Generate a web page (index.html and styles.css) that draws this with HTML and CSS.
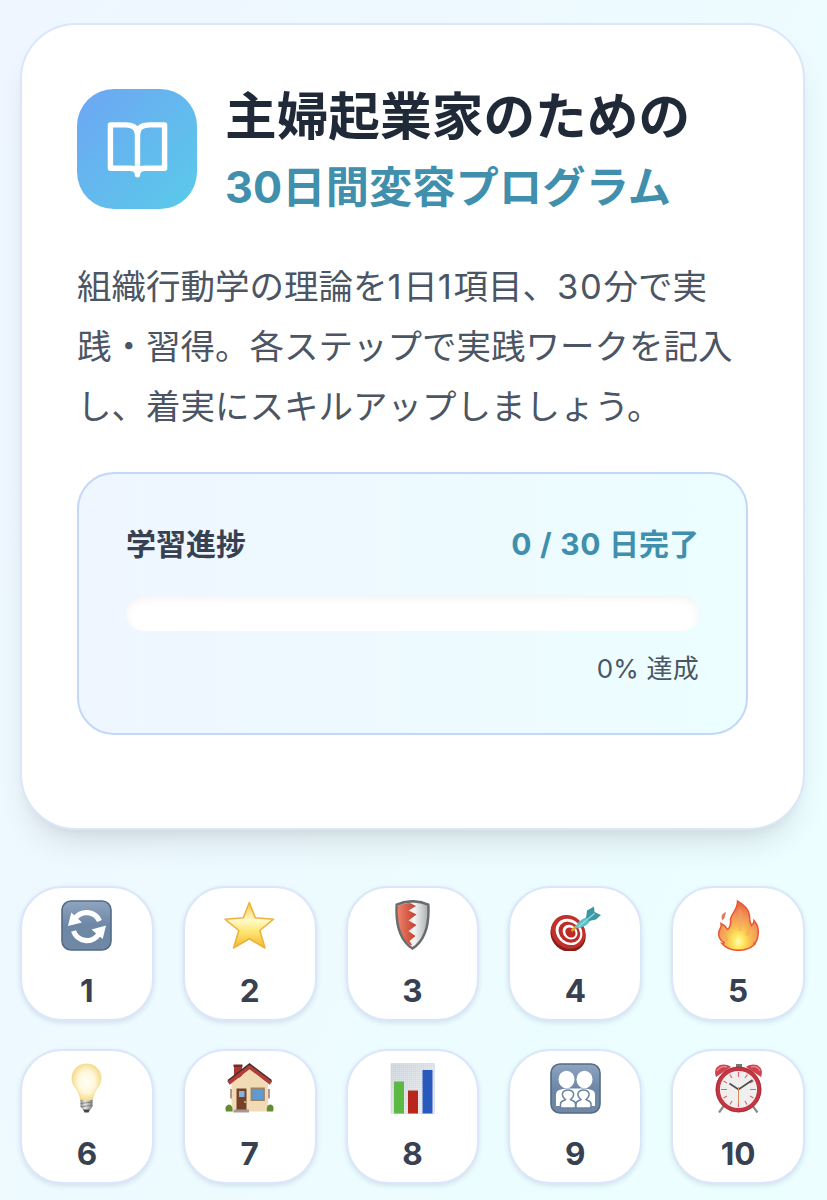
FILE: index.html
```html
<!DOCTYPE html>
<html lang="ja">
<head>
<meta charset="utf-8">
<title>30日間変容プログラム</title>
<link rel="stylesheet" href="styles.css">
</head>
<body>
<main class="page">
  <section class="card">
    <header class="hero">
      <div class="logo">
        <svg viewBox="0 0 24 24" fill="none" stroke="#fff" stroke-width="2" stroke-linecap="round" stroke-linejoin="round"><path d="M12 6.500v14.800M2 2.900h5.500Q12 2.900 12 6.500 12 2.900 16.500 2.900H22V18.900h-7.200Q12 18.900 12 21.300 12 18.900 9.200 18.900H2z"/></svg>
      </div>
      <h1 class="title"><span class="title-main">主婦起業家のための</span><span class="title-sub">30日間変容プログラム</span></h1>
    </header>
    <p class="lead">組織行動学の理論を<span class="num">1</span>日<span class="num">1</span>項目、<span class="num">30</span>分で実<br>践・習得。各ステップで実践ワークを記入<br>し、着実にスキルアップしましょう。</p>
    <div class="progress">
      <div class="progress-head"><span class="label">学習進捗</span><span class="count"><span class="num-bold">0 / 30 </span>日完了</span></div>
      <div class="bar"></div>
      <div class="percent">0% 達成</div>
    </div>
  </section>

  <nav class="days">
    <button class="day"><svg viewBox="0 0 51 51"><defs><linearGradient id="slate" x2="0" y2="1"><stop offset="0" stop-color="#8fa5bf"/><stop offset=".5" stop-color="#6d87a6"/><stop offset="1" stop-color="#7088a5"/></linearGradient></defs><rect x="1" y="1" width="49" height="49" rx="9" fill="url(#slate)" stroke="#536b86" stroke-width="1.600"/><g fill="none" stroke="#fff" stroke-width="5.200"><path d="M14 18.500A14.200 14.200 0 0 1 38.500 21"/><path d="M37.500 34.500A14.200 14.200 0 0 1 12.500 31"/></g><path d="M7 26 10.300 12.500 21 22.500zM45 25.500 41.700 39 30.500 29.500z" fill="#fff"/></svg><span>1</span></button>

    <button class="day"><svg viewBox="0 0 51 51"><defs><linearGradient id="gold" x2="0" y2="1"><stop offset="0" stop-color="#fbc94d"/><stop offset=".4" stop-color="#fff9c8"/><stop offset=".62" stop-color="#fde977"/><stop offset="1" stop-color="#f5b52c"/></linearGradient></defs><path d="M25.300 2.500 31.300 17.800 49.600 19.200 35.800 30.500 41 48 25.300 38.800 9.600 48 14.800 30.500 1 19.200 19.300 17.800z" fill="url(#gold)" stroke="#edb23d" stroke-width="1.600" stroke-linejoin="round"/></svg><span>2</span></button>

    <button class="day"><svg viewBox="0 0 51 51"><defs><linearGradient id="silver"><stop offset="0" stop-color="#bbb"/><stop offset=".55" stop-color="#f4f4f4"/><stop offset="1" stop-color="#a8acaf"/></linearGradient><linearGradient id="rust"><stop offset="0" stop-color="#ef8069"/><stop offset="1" stop-color="#bf3f2c"/></linearGradient></defs><path d="M25.500 1Q34 1.200 41.500 4.500C43 25 39 40 25.500 49 12 40 8 25 9.500 4.500Q17 1.200 25.500 1z" fill="url(#silver)"/><path d="M23 3Q15 4 11 6C9.500 23 13 37 23 45L25 45 22.500 41 28.500 36 21.500 31 29.500 25 21.500 20.500 29.500 14.500 21.500 10.500 29 6z" fill="url(#rust)"/><path d="M25.500 1.200Q34 1.400 41.300 4.600C42.500 25 38.500 40 25.500 48.500 12.500 40 8.500 25 9.700 4.600Q17 1.400 25.500 1.200z" fill="none" stroke="#6b6c6d" stroke-width="2.500"/></svg><span>3</span></button>

    <button class="day"><svg viewBox="0 0 51 51"><g transform="rotate(42 18 33)"><ellipse cx="19" cy="34" rx="18.500" ry="16.500" fill="#861e1a"/><ellipse cx="17.500" cy="32" rx="18" ry="16" fill="#c2302a"/><ellipse cx="18" cy="31.500" rx="14.200" ry="12.200" fill="#fff"/><ellipse cx="18.500" cy="31.500" rx="11.500" ry="9.800" fill="#bd2c26"/><ellipse cx="19" cy="31" rx="8" ry="6.800" fill="#fff"/><ellipse cx="19.500" cy="31" rx="5.500" ry="4.600" fill="#bd2c26"/></g><path d="M21.500 31 27 26" stroke="#d8a729" stroke-width="2.500"/><path d="M25.500 28.500Q27 20.500 37 17L40.500 20.500Q36 28 25.500 28.500z" fill="#61bfc7"/><path d="M36 18 37 10.500 44 6.500 44.500 12 51 15 46 19.500 39 21z" fill="#3f96a5"/><path d="M28 27 44.500 13.500" stroke="#8be0e0" stroke-width="1.300"/></svg><span>4</span></button>

    <button class="day"><svg viewBox="0 0 51 51"><defs><radialGradient id="flame" cx=".5" cy=".82" r=".78"><stop offset="0" stop-color="#fffcb5"/><stop offset=".18" stop-color="#ffe75e"/><stop offset=".4" stop-color="#f8bb50"/><stop offset=".65" stop-color="#f2985a"/><stop offset="1" stop-color="#ec6440"/></radialGradient></defs><path d="M24.500 1C29 4 36 8 36.500 16Q36.500 22 38.500 25.500 41 23.500 41 20.500C45 25 46 32 44.500 38Q43.500 42 41.500 43 43 43.500 41 45C36 49.500 30 50.500 24 50.300 17 50 12 47 9 43.500Q11 44 11 42.500C5 39 4.500 33 7.500 28Q8.500 26 8 23.500C12 25 13 27 14.500 29.500Q18 27 17.500 20C17 15 25 10 24.500 1z" fill="url(#flame)" stroke="#e95735" stroke-width="1.500"/><path d="M13 12C8 14 8 17 9.500 20.500Q12 18 12 16z" fill="#ec7454"/><path d="M26.500 9C30 18 26 24 27 31M36 26Q37 32 33 35M13 29Q9 37 15 40" fill="none" stroke="#f5a166" stroke-width="3" opacity=".45"/></svg><span>5</span></button>

    <button class="day"><svg viewBox="0 0 51 51"><defs><radialGradient id="glow" cx=".5" cy=".48" r=".57"><stop offset="0" stop-color="#fffef7"/><stop offset=".5" stop-color="#fff8dc"/><stop offset="1" stop-color="#f2d577"/></radialGradient><linearGradient id="metal"><stop offset="0" stop-color="#8a8a8a"/><stop offset=".4" stop-color="#e9e9e9"/><stop offset="1" stop-color="#777"/></linearGradient></defs><path d="M25.500 1C17 1 11 7 11 15.500 11 24 18.500 26 19.500 37Q25.500 39 31.500 37C32.500 26 40 24 40 15.500 40 7 34 1 25.500 1z" fill="url(#glow)" stroke="#efd88e" stroke-width=".8"/><path d="M19.500 36.500Q25.500 39 31.500 36.500V43.500L29 47H22L19.500 43.500z" fill="url(#metal)"/><path d="M19.500 40.500 31.500 39M19.500 43.800 31.500 42.300" stroke="#777" stroke-width=".8"/><path d="M22 46.500H29L27.500 49.500H23.500z" fill="#4b4541"/></svg><span>6</span></button>

    <button class="day"><svg viewBox="0 0 51 51"><path d="M10 2H18V15H10z" fill="#a93932"/><path d="M9.500 1.500H18.500V4H9.500z" fill="#7e2822"/><path d="M7.500 21 26 6 44 21V48.500H7.500z" fill="#f0dbb5"/><path d="M4.500 20 25.500 3.500 47 20" fill="none" stroke="#b53c34" stroke-width="4.200"/><path d="M4 17.500 25.500 1 47.500 17.500" fill="none" stroke="#43302e" stroke-width="1.500"/><path d="M12.500 25.500H22.500V47H12.500z" fill="#76402b"/><path d="M15 28H20.500V34H15z" fill="#82b5dd"/><circle cx="21" cy="39" r="1" fill="#eac56c"/><path d="M27.500 25.500H40V37H27.500z" fill="#5f9bd0" stroke="#9c8367" stroke-width="1.800"/><path d="M7 26V35.500M45 26V35.500" stroke="#9d6c57" stroke-width="1.400"/><path d="M2 48.500Q0 43 5 41.500 9 42 8.500 48.500zM43 48.500Q42 42 46 41.500 51 42 49 48.500z" fill="#638c31"/><path d="M10.500 46.500H25V49.500H9z" fill="#a39b92"/></svg><span>7</span></button>

    <button class="day"><svg viewBox="0 0 51 51"><defs><linearGradient id="paper" x2="1" y2="1"><stop offset="0" stop-color="#d5dbe2"/><stop offset="1" stop-color="#f7fafc"/></linearGradient><pattern id="graph" width="2" height="2" patternUnits="userSpaceOnUse"><path d="M0 0H2M0 0V2" stroke="#b9c3cf" stroke-width=".45"/></pattern></defs><path d="M4 .500H47.500V50.500H4z" fill="url(#paper)"/><path d="M4 .500H47.500V50.500H4z" fill="url(#graph)" stroke="#d4dae0" stroke-width=".7"/><path d="M7 18.500H17V50.500H7z" fill="#5cb944"/><path d="M21 27.500H31V50.500H21z" fill="#b9261b"/><path d="M35.500 7H45.500V50.500H35.500z" fill="#2859bd"/></svg><span>8</span></button>

    <button class="day"><svg viewBox="0 0 51 51"><rect x="1" y="1" width="49" height="49" rx="9" fill="url(#slate)" stroke="#536b86" stroke-width="1.600"/><path d="M6 43V32C6 26 12 26.500 16 25.500H35C39 26.500 45 26 45 32V43z" fill="#fff"/><ellipse cx="16.500" cy="16.500" rx="8" ry="8.800" fill="#fff"/><ellipse cx="34.500" cy="16.500" rx="8" ry="8.800" fill="#fff"/><g fill="#fff" stroke="#6b839f" stroke-width="1.500"><path d="M10.500 45V41C10.500 37.500 14 38 15.500 36.500 10 32 12.500 27 18 27S26 32 20.500 36.500C22 38 25.500 37.500 25.500 41V45zM26 45V41C26 37.500 29.500 38 31 36.500 25.500 32 28 27 33.500 27S41.500 32 36 36.500C37.500 38 41 37.500 41 41V45z"/></g></svg><span>9</span></button>

    <button class="day"><svg viewBox="0 0 51 51"><path d="M11.500 42 6 49.500M39 42 44.500 49.500" stroke="#8e8c8b" stroke-width="2.200"/><path d="M23 1H29V6H23z" fill="#777"/><path d="M3 14C-1 4 9-2 18 4zM48 14C52 4 42-2 33 4z" fill="#cf414c"/><path d="M4 8Q8 2 14 4M38 4Q44 2 47 8" fill="none" stroke="#e98288" stroke-width="1.500"/><circle cx="25.500" cy="26.500" r="20.700" fill="#f0efed" stroke="#c33543" stroke-width="4.200"/><circle cx="25.500" cy="26.500" r="22.500" fill="none" stroke="#982832" stroke-width=".7"/><g stroke="#d86a70" stroke-width="1.200"><path d="M25.500 9V14M25.500 39V44M8 26.500H14M37 26.500H43"/><path d="M16.800 11.500 19 15M34.500 11.500 32 15M10.500 18 14 20M40.500 18 37 20M10.500 35 14 33M40.500 35 37 33M17 41.500 19 38M34 41.500 32 38"/></g><path d="M16.500 20.500 25.500 26.500 39.500 17" fill="none" stroke="#4b5050" stroke-width="1.700"/><path d="M25.500 24V41" stroke="#d68a5e" stroke-width="1"/></svg><span>10</span></button>
  </nav>
</main>
</body>
</html>
```
FILE: styles.css
```css
* { box-sizing: border-box; }
body {
  margin: 0;
  font-family: Inter, "Noto Sans CJK JP", sans-serif;
  color: #374151;
}
.page {
  height: 1200px;
  overflow: hidden;
  padding: 23px 22px 0 20px;
  background: linear-gradient(115deg, #eff6ff 0%, #ecfeff 85%);
}
.card {
  height: 807px;
  padding: 64px 55px 0;
  background: #fff;
  border: 2px solid #dbe6fa;
  border-radius: 56px;
  box-shadow: 0 20px 32px -8px rgba(0, 0, 0, .11), 0 8px 14px -8px rgba(0, 0, 0, .08);
}
.hero { display: flex; gap: 28px; }
.logo {
  display: grid;
  place-items: center;
  flex: none;
  width: 120px;
  height: 120px;
  margin-right: 0;
  border-radius: 37px;
  background: linear-gradient(135deg, #6ea6f4, #59cbe8);
}
.logo svg { width: 65px; height: 65px; }
.title { margin: -1px 0 0; height: 121px; white-space: nowrap; }
.title span { display: block; font-weight: 700; }
.title-main { font-size: 51.700px; line-height: 56px; color: #1f2937; }
.title-sub { margin-top: 15px; font-size: 43.200px; line-height: 56px; color: #3f8fad; letter-spacing: .15px; }
.lead {
  margin: 48px 0 0;
  font-size: 34.500px;
  line-height: 60px;
  color: #4b5563;
  white-space: nowrap;
}
.num { letter-spacing: 1.700px; }
.num-bold { letter-spacing: .7px; }
.progress {
  width: 671px;
  height: 263px;
  margin-top: 35px;
  padding: 48px 47px 0;
  border: 2px solid #c3d7f8;
  border-radius: 37px;
  background: linear-gradient(90deg, #eff6ff, #ecfeff);
}
.progress-head {
  display: flex;
  justify-content: space-between;
  font-size: 30px;
  line-height: 44px;
  font-weight: 700;
}
.count { color: #3f8fad; }
.bar {
  height: 36px;
  margin-top: 29px;
  border-radius: 18px;
  background: #fff;
  box-shadow: inset 0 4px 8px rgba(0, 0, 0, .05);
}
.percent { margin-top: 19px; text-align: right; font-size: 26px; line-height: 38px; color: #4b5563; letter-spacing: .2px; }
.days {
  display: grid;
  grid-template-columns: repeat(5, 1fr);
  gap: 28px 29px;
  margin-top: 56px;
}
.day {
  display: flex;
  flex-direction: column;
  align-items: center;
  height: 135px;
  padding: 12px 0 0;
  border: 2px solid #dbe6fa;
  border-radius: 42px;
  background: #fff;
  box-shadow: 0 2px 5px rgba(30, 60, 100, .13);
  color: #374151;
  font-family: Inter, sans-serif;
  font-size: 31.500px;
  font-weight: 700;
  line-height: 38px;
}
.day svg { width: 51px; height: 51px; }
.day span { margin-top: 21px; }
```
